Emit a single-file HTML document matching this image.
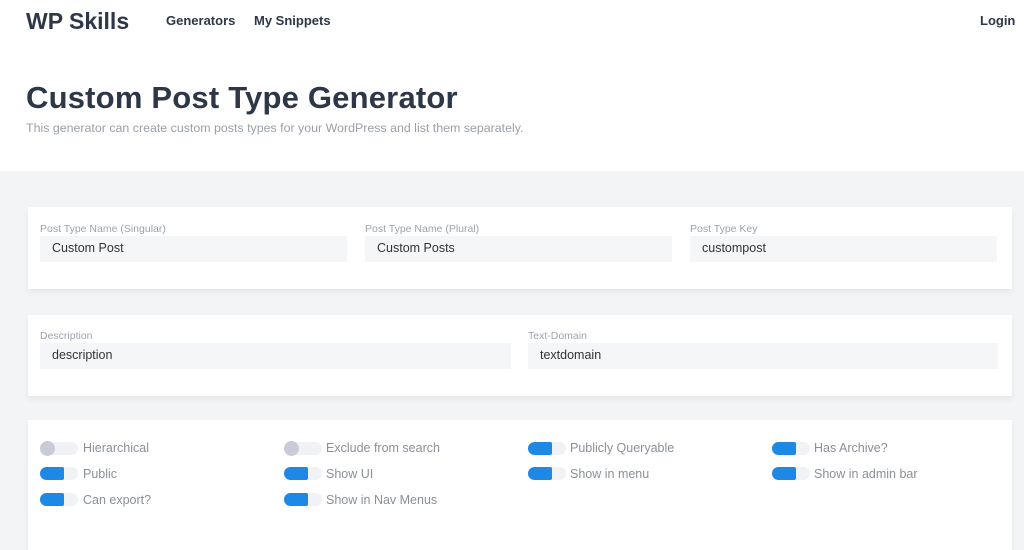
<!DOCTYPE html>
<html><head><style>
*{margin:0;padding:0;box-sizing:border-box}
body{width:1024px;height:536px;overflow:hidden;background:#f3f4f6;font-family:"Liberation Sans","DejaVu Sans",sans-serif;position:relative}
.hdr{position:absolute;left:0;top:0;width:1024px;height:171px;background:#fff}
.abs{position:absolute;white-space:nowrap}
.logo{left:26px;top:8px;font-size:23px;font-weight:bold;color:#2d3748}
.nav{top:13px;font-size:13px;font-weight:bold;color:#2d3748}
h1{position:absolute;left:26px;top:80px;font-size:31px;font-weight:bold;color:#2d3748;letter-spacing:0.2px;white-space:nowrap}
.sub{left:26px;top:121px;font-size:12.4px;color:#9aa0a8}
.card{position:absolute;left:28px;width:984px;background:#fff;box-shadow:0 3px 6px rgba(0,0,0,0.06)}
.lbl{font-size:10.5px;color:#9ca3af}
.inp{position:absolute;height:26px;background:#f5f6f8;font-size:12.5px;color:#333;padding:5px 12px}
.tg{position:absolute;width:38px;height:13px;border-radius:7px;background:#f0f2f5}
.tg.on::before{content:"";position:absolute;left:0;top:0;width:24px;height:13px;border-radius:7px 2px 2px 7px;background:#1e88e5}
.tg.off::before{content:"";position:absolute;left:0;top:-1px;width:15px;height:15px;border-radius:50%;background:#c8ccd8}
.tl{position:absolute;font-size:12.5px;color:#8a9099;white-space:nowrap}
</style></head><body>
<div class="hdr"></div>
<div class="abs logo">WP Skills</div>
<div class="abs nav" style="left:166px">Generators</div>
<div class="abs nav" style="left:254px">My Snippets</div>
<div class="abs nav" style="left:980px">Login</div>
<h1>Custom Post Type Generator</h1>
<div class="abs sub">This generator can create custom posts types for your WordPress and list them separately.</div>

<div class="card" style="top:207px;height:82px"></div>
<div class="abs lbl" style="left:40px;top:223px">Post Type Name (Singular)</div>
<div class="abs lbl" style="left:365px;top:223px">Post Type Name (Plural)</div>
<div class="abs lbl" style="left:690px;top:223px">Post Type Key</div>
<div class="inp" style="left:40px;top:236px;width:307px">Custom Post</div>
<div class="inp" style="left:365px;top:236px;width:307px">Custom Posts</div>
<div class="inp" style="left:690px;top:236px;width:307px">custompost</div>

<div class="card" style="top:315px;height:81px"></div>
<div class="abs lbl" style="left:40px;top:330px">Description</div>
<div class="abs lbl" style="left:528px;top:330px">Text-Domain</div>
<div class="inp" style="left:40px;top:343px;width:471px">description</div>
<div class="inp" style="left:528px;top:343px;width:470px">textdomain</div>

<div class="card" style="top:420px;height:130px"></div>
<div class="tg off" style="left:40px;top:442px"></div><div class="tl" style="left:83px;top:441px">Hierarchical</div>
<div class="tg on" style="left:40px;top:467px"></div><div class="tl" style="left:83px;top:467px">Public</div>
<div class="tg on" style="left:40px;top:493px"></div><div class="tl" style="left:83px;top:493px">Can export?</div>
<div class="tg off" style="left:284px;top:442px"></div><div class="tl" style="left:326px;top:441px">Exclude from search</div>
<div class="tg on" style="left:284px;top:467px"></div><div class="tl" style="left:326px;top:467px">Show UI</div>
<div class="tg on" style="left:284px;top:493px"></div><div class="tl" style="left:326px;top:493px">Show in Nav Menus</div>
<div class="tg on" style="left:528px;top:442px"></div><div class="tl" style="left:570px;top:441px">Publicly Queryable</div>
<div class="tg on" style="left:528px;top:467px"></div><div class="tl" style="left:570px;top:467px">Show in menu</div>
<div class="tg on" style="left:772px;top:442px"></div><div class="tl" style="left:814px;top:441px">Has Archive?</div>
<div class="tg on" style="left:772px;top:467px"></div><div class="tl" style="left:814px;top:467px">Show in admin bar</div>
</body></html>
